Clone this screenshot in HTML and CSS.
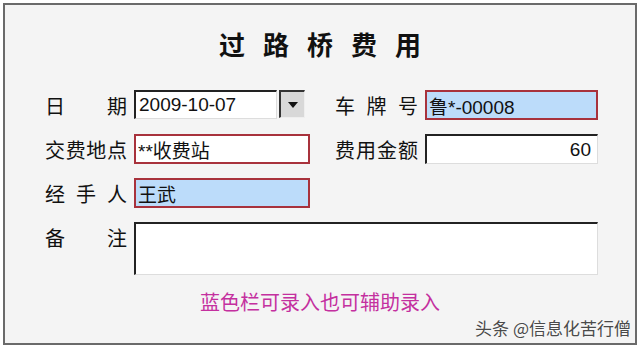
FILE: index.html
```html
<!DOCTYPE html>
<html lang="zh-CN">
<head>
  <meta charset="UTF-8">
  <meta name="viewport" content="width=device-width, initial-scale=1.0">
  <title>过路桥费用</title>
  <link rel="stylesheet" href="styles.css">
</head>
<body>
  <div class="frame">
    <h1 class="title">过路桥费用</h1>

    <div class="form">
      <div class="label"><span>日</span><span>期</span></div>
      <div class="date-box">
        <input class="field sunken date" type="text" value="2009-10-07">
        <div class="drop-btn"><span class="arrow"></span></div>
      </div>
      <div class="label label-right"><span>车</span><span>牌</span><span>号</span></div>
      <input class="field marked blue" type="text" value="鲁*-00008">

      <div class="label"><span>交</span><span>费</span><span>地</span><span>点</span></div>
      <input class="field marked" type="text" value="**收费站">
      <div class="label label-right"><span>费</span><span>用</span><span>金</span><span>额</span></div>
      <input class="field sunken amount" type="text" value="60">

      <div class="label"><span>经</span><span>手</span><span>人</span></div>
      <input class="field marked blue" type="text" value="王武">
      <div></div>
      <div></div>

      <div class="label label-top"><span>备</span><span>注</span></div>
      <textarea class="field sunken note"></textarea>
    </div>

    <p class="hint">蓝色栏可录入也可辅助录入</p>

    <div class="watermark">头条 @信息化苦行僧</div>
  </div>
</body>
</html>
```

FILE: styles.css
```css
body {
  margin: 0;
  background-color: #fff;
  font-family: "Noto Sans CJK SC", "Liberation Sans", sans-serif;
}
.frame {
  position: relative;
  box-sizing: border-box;
  width: 634px;
  height: 342px;
  margin: 3px;
  border: 2px solid #6a6a6a;
  background-color: #f4f4f4;
  padding: 21px 0 0 40px;
}
.title {
  margin: 0 0 28px -40px;
  font-size: 26px;
  line-height: 36px;
  font-weight: bold;
  text-align: center;
  letter-spacing: 18px;
  padding-left: 18px;
  color: #111;
}
.form {
  display: grid;
  grid-template-columns: 82px 176px 101px 173px;
  grid-auto-rows: 30px;
  column-gap: 7px;
  row-gap: 14px;
}
.label {
  display: flex;
  justify-content: space-between;
  align-items: center;
  font-size: 20px;
  color: #111;
}
.label-right {
  margin-left: 18px;
}
.label-top {
  align-self: start;
  height: 30px;
}
.field {
  box-sizing: border-box;
  width: 100%;
  height: 100%;
  margin: 0;
  font-family: "Liberation Sans", "Noto Sans CJK SC", sans-serif;
  font-size: 19px;
  color: #111;
  outline: none;
}
.sunken {
  background-color: #fff;
  border-style: solid;
  border-width: 2px 1px 1px 2px;
  border-color: #222 #ddd #ddd #222;
  padding: 0 4px 0 3px;
}
.marked {
  background-color: #fff;
  border: 2px solid #a8323c;
  padding: 0 4px 0 2px;
}
.blue {
  background-color: #bcdcfa;
}
.date-box {
  display: flex;
  gap: 2px;
  width: 171px;
}
.date {
  width: 143px;
  height: 29px;
}
.drop-btn {
  box-sizing: border-box;
  width: 26px;
  height: 28px;
  background-color: #d8d8d8;
  border-style: solid;
  border-width: 2px 1px 1px 2px;
  border-color: #333 #eee #eee #333;
  display: flex;
  align-items: center;
  justify-content: center;
}
.arrow {
  width: 0;
  height: 0;
  border-left: 5px solid transparent;
  border-right: 5px solid transparent;
  border-top: 6px solid #111;
}
.amount {
  text-align: right;
  padding-right: 6px;
}
.note {
  grid-column: 2 / 5;
  height: 53px;
  resize: none;
}
.hint {
  margin: 37px 0 0 -40px;
  text-align: center;
  font-size: 20px;
  line-height: 26px;
  color: #c4309f;
}
.watermark {
  position: absolute;
  right: 4px;
  bottom: 3px;
  font-size: 17px;
  color: #4a4a4a;
  text-shadow: 0 0 2px #fff;
}
```
